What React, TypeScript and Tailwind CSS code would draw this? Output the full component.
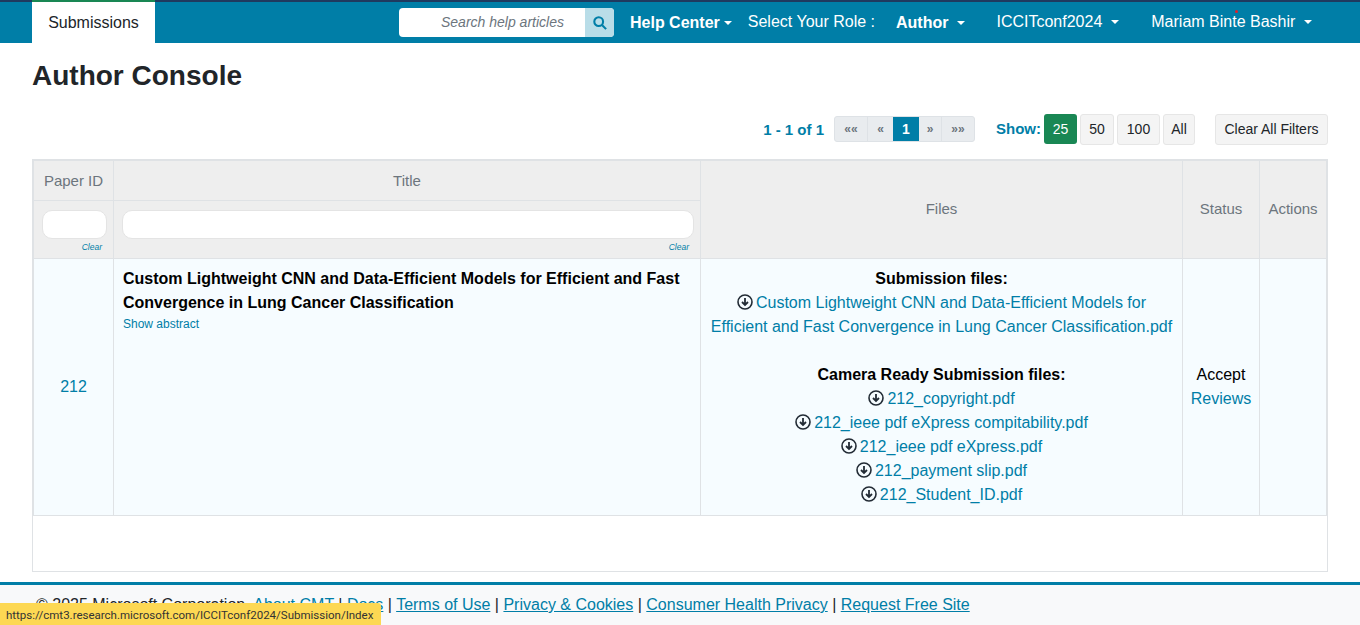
const files = [
  "212_copyright.pdf",
  "212_ieee pdf eXpress compitability.pdf",
  "212_ieee pdf eXpress.pdf",
  "212_payment slip.pdf",
  "212_Student_ID.pdf",
];

function Caret() {
  return <span className="inline-block ml-[9px] align-[3px] border-x-[4px] border-t-[4px] border-x-transparent border-t-white" />;
}

function DownloadIcon() {
  return (
    <svg viewBox="0 0 16 16" className="inline-block w-[16px] h-[16px] align-[-2px] mr-[3px]" fill="none" stroke="#222b35">
      <circle cx="8" cy="8" r="7" strokeWidth="1.6" />
      <path d="M8 4v7M5 8l3 3 3-3" strokeWidth="1.8" />
    </svg>
  );
}

function FilterInput({ clearClass }: { clearClass: string }) {
  return (
    <div className={clearClass}>
      <div className="h-[29px] rounded-[10px] bg-white border border-[#e4e4e4]" />
      <div className="mt-[3px] text-right text-[8.5px] italic leading-[11px] text-[#007ea7] pr-[5px]">Clear</div>
    </div>
  );
}

function ShowButton({ label, widthClass, active }: { label: string; widthClass: string; active?: boolean }) {
  return (
    <button
      className={
        active
          ? `h-[30px] ${widthClass} rounded-[3px] bg-[#198754] text-white text-[14px]`
          : `h-[31px] ${widthClass} rounded-[3px] bg-[#f4f4f4] border border-[#e6e6e6] text-[#212529] text-[14px]`
      }
    >
      {label}
    </button>
  );
}

export default function App() {
  return (
    <div className="relative h-[625px] overflow-hidden bg-white text-[16px] leading-[24px] text-[#212529] font-['Liberation_Sans',Arial,sans-serif]">
      <header className="h-[43px] bg-[#007ea7] border-t-2 border-[#1f3a5f] flex items-stretch pl-[32px] text-white">
        <div className="w-[123px] -mt-[2px] bg-white border-t-2 border-[#198754] text-[#212529] flex items-center justify-center">
          Submissions
        </div>
        <div className="ml-[244px] mt-[6px] w-[215px] h-[29px] rounded-[4px] bg-white flex overflow-hidden">
          <div className="flex-1 text-[14px] italic text-[#6c757d] leading-[29px] pl-[42px]">Search help articles</div>
          <div className="w-[29px] bg-[#b9dde8] flex items-center justify-center">
            <svg viewBox="0 0 16 16" className="w-[14px] h-[14px]" fill="none" stroke="#007ea7" strokeWidth="2.4">
              <circle cx="6.5" cy="6.5" r="5" />
              <path d="M10.5 10.5L15 15" />
            </svg>
          </div>
        </div>
        <div className="ml-[16px] font-bold flex items-center">
          Help Center
          <span className="inline-block ml-[4px] border-x-[4px] border-t-[4px] border-x-transparent border-t-white" />
        </div>
        <div className="ml-[16px] flex items-center -mt-[1px]">Select Your Role :</div>
        <div className="ml-[21px] font-bold flex items-center">
          <span>Author</span>
          <Caret />
        </div>
        <div className="ml-[31px] flex items-center -mt-[1px]">
          <span>ICCITconf2024</span>
          <Caret />
        </div>
        <div className="ml-[32px] flex items-center -mt-[1px] relative">
          <span>Mariam Binte Bashir</span>
          <Caret />
          <span className="absolute left-[84px] top-[9px] w-[3px] h-[3px] rounded-full bg-[#e0202a]" />
        </div>
      </header>

      <main className="px-[32px]">
        <h1 className="mt-[16px] text-[28px] leading-[34px] font-bold text-[#212529]">Author Console</h1>

        <div className="mt-[20px] h-[32px] flex items-center justify-end">
          <span className="pt-[1px] font-bold text-[#007ea7] mr-[10px] text-[15px]">1 - 1 of 1</span>
          <div className="flex h-[26px] rounded-[3px] overflow-hidden bg-[#e9ecef] border border-[#dee2e6] text-[12px] font-bold text-[#6c757d] leading-[24px]">
            <span className="w-[33px] text-center border-r border-[#dee2e6]">««</span>
            <span className="w-[25px] text-center">«</span>
            <span className="w-[26px] text-center bg-[#007ea7] text-white text-[14px]">1</span>
            <span className="w-[23px] text-center border-r border-[#dee2e6]">»</span>
            <span className="w-[32px] text-center">»»</span>
          </div>
          <span className="ml-[21px] mr-[3px] font-bold text-[#007ea7] text-[15px]">Show:</span>
          <div className="flex items-center gap-[3px]">
            <ShowButton label="25" widthClass="w-[33px]" active />
            <ShowButton label="50" widthClass="w-[34px]" />
            <ShowButton label="100" widthClass="w-[43px]" />
            <ShowButton label="All" widthClass="w-[32px]" />
          </div>
          <button className="ml-[20px] h-[31px] w-[113px] rounded-[3px] bg-[#f4f4f4] border border-[#e6e6e6] text-[14px] text-[#212529]">
            Clear All Filters
          </button>
        </div>

        <div className="mt-[14px] h-[413px] border border-[#dfe2e5]">
          <table className="w-full table-fixed border-collapse">
            <colgroup>
              <col className="w-[80px]" />
              <col className="w-[587px]" />
              <col className="w-[482px]" />
              <col className="w-[77px]" />
              <col />
            </colgroup>
            <thead className="bg-[#eeeeee] text-[#6c757d] font-normal">
              <tr className="h-[40px]">
                <th className="font-normal text-[15px] border border-[#dfe2e5]">Paper ID</th>
                <th className="font-normal text-[15px] border border-[#dfe2e5]">Title</th>
                <th rowSpan={2} className="pb-[2px] font-normal text-[15px] border border-[#dfe2e5]">Files</th>
                <th rowSpan={2} className="pb-[2px] font-normal text-[15px] border border-[#dfe2e5]">Status</th>
                <th rowSpan={2} className="pb-[2px] font-normal text-[15px] border border-[#dfe2e5]">Actions</th>
              </tr>
              <tr className="h-[58px]">
                <td className="border border-[#dfe2e5] align-top pt-[9px] px-[8px]">
                  <FilterInput clearClass="w-[65px]" />
                </td>
                <td className="border border-[#dfe2e5] align-top pt-[9px] pl-[8px] pr-[6px]">
                  <FilterInput clearClass="w-full" />
                </td>
              </tr>
            </thead>
            <tbody className="bg-[#f6fcff]">
              <tr className="h-[257px]">
                <td className="border border-[#dfe2e5] text-center text-[#007ea7]">212</td>
                <td className="border border-[#dfe2e5] align-top px-[9px] pt-[8px]">
                  <div className="font-bold text-black">
                    Custom Lightweight CNN and Data-Efficient Models for Efficient and Fast Convergence in Lung Cancer Classification
                  </div>
                  <div className="text-[12px] leading-[18px] text-[#007ea7]">Show abstract</div>
                </td>
                <td className="border border-[#dfe2e5] align-top pt-[8px] px-[9px] text-center text-[#007ea7]">
                  <div className="font-bold text-black">Submission files:</div>
                  <div>
                    <DownloadIcon />
                    Custom Lightweight CNN and Data-Efficient Models for Efficient and Fast Convergence in Lung Cancer Classification.pdf
                  </div>
                  <div className="mt-[24px] font-bold text-black">Camera Ready Submission files:</div>
                  {files.map((f) => (
                    <div key={f}>
                      <DownloadIcon />
                      {f}
                    </div>
                  ))}
                </td>
                <td className="border border-[#dfe2e5] text-center">
                  <div className="text-black">Accept</div>
                  <div className="text-[#007ea7]">Reviews</div>
                </td>
                <td className="border border-[#dfe2e5]" />
              </tr>
            </tbody>
          </table>
        </div>
      </main>

      <footer className="mt-[10px] h-[50px] bg-[#f8f9fa] border-t-[3px] border-[#007ea7] pl-[36px] pt-[8px] text-[#212529]">
        © 2025 Microsoft Corporation. <a className="text-[#007ea7] underline">About CMT</a> | <a className="text-[#007ea7] underline">Docs</a> | <a className="text-[#007ea7] underline">Terms of Use</a> | <a className="text-[#007ea7] underline">Privacy &amp; Cookies</a> | <a className="text-[#007ea7] underline">Consumer Health Privacy</a> | <a className="text-[#007ea7] underline">Request Free Site</a>
      </footer>

      <div className="absolute left-0 bottom-0 w-[381px] h-[22px] bg-[#fdd853] rounded-tr-[3px] pl-[6px] text-[11.5px] leading-[24px] text-[#333] font-['Roboto',sans-serif]">
        https://cmt3.research.microsoft.com/ICCITconf2024/Submission/Index
      </div>
    </div>
  );
}
